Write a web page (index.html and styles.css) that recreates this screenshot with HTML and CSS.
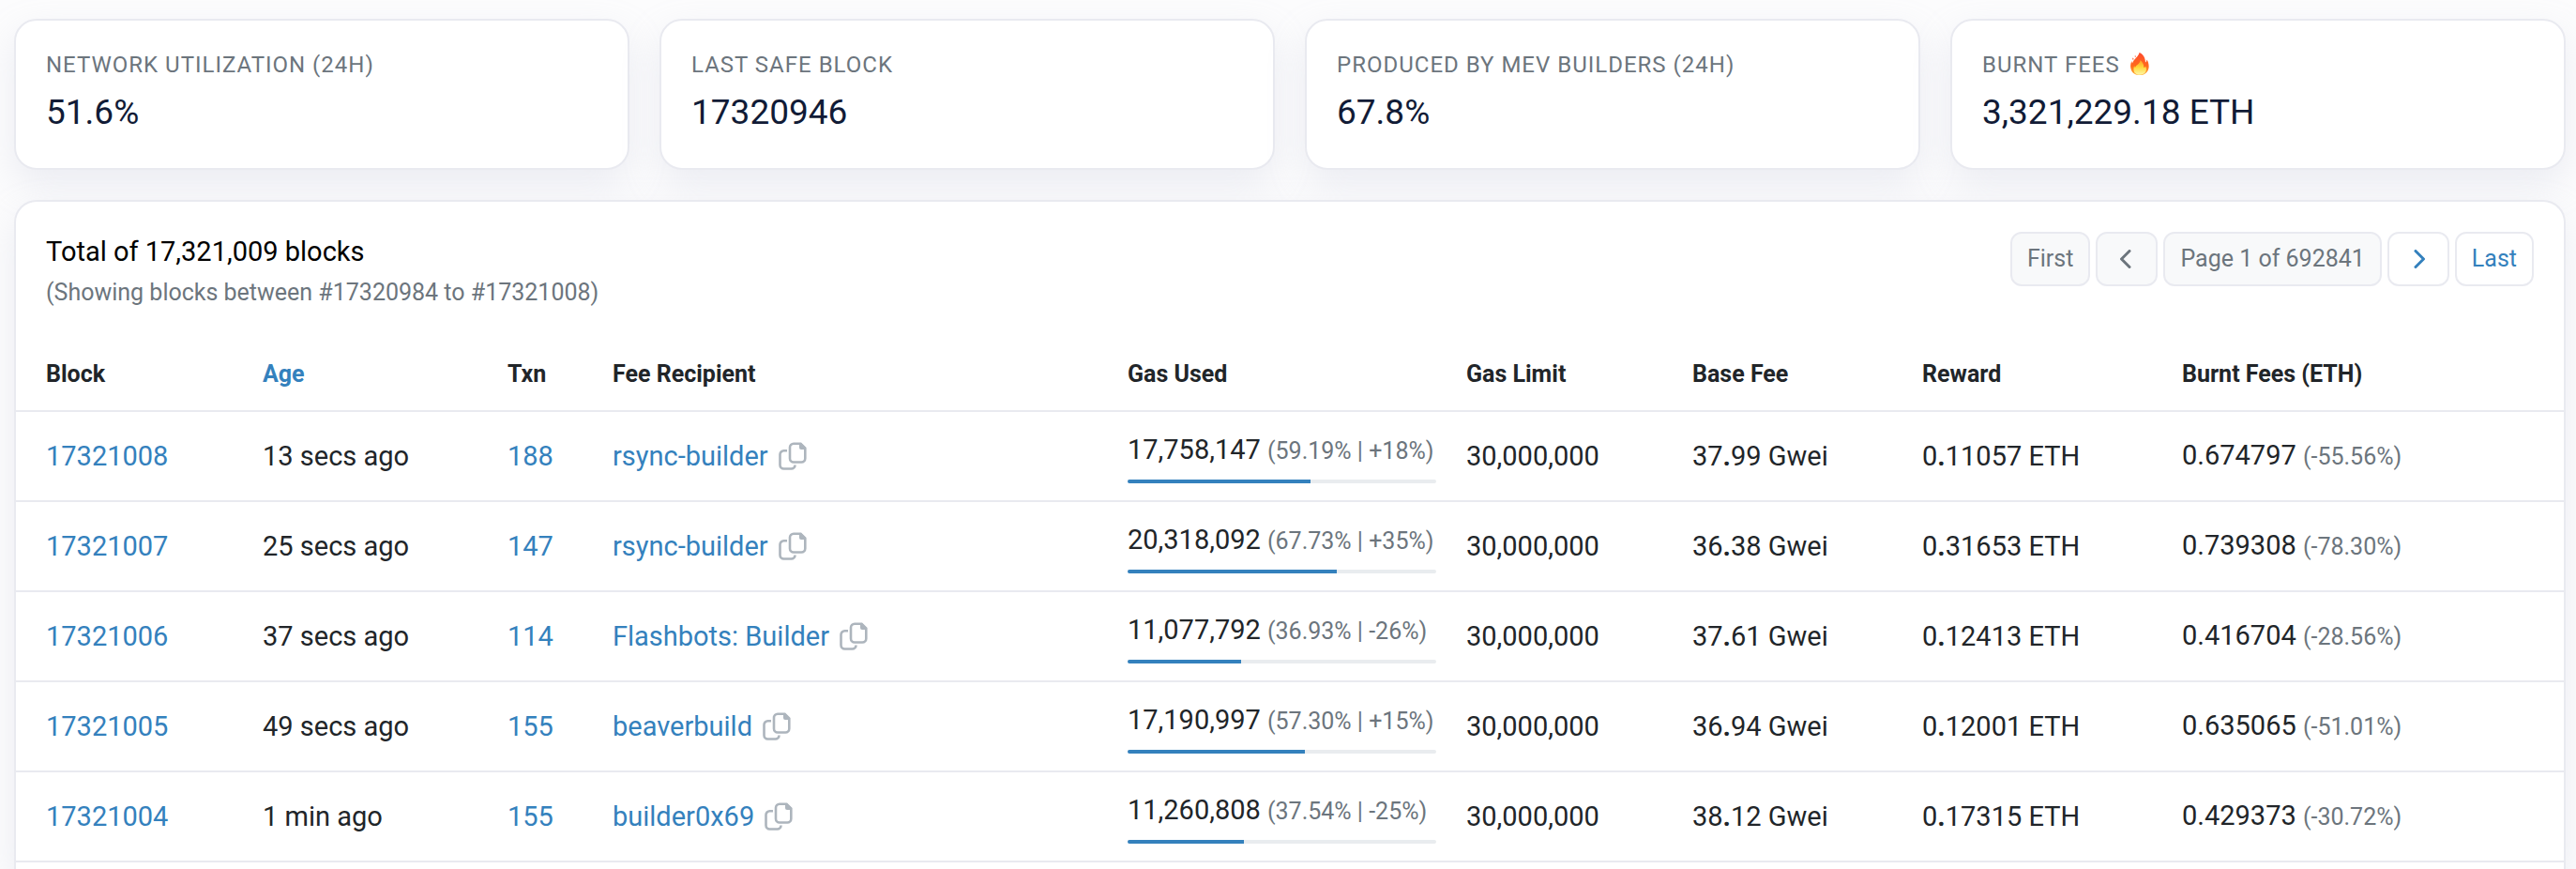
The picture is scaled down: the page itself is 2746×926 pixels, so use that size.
FILE: index.html
```html
<!DOCTYPE html>
<html lang="en">
<head>
<meta charset="utf-8">
<title>Blocks</title>
<link rel="stylesheet" href="styles.css">
</head>
<body>
<svg class="sprite" aria-hidden="true">
  <symbol id="copy" viewBox="0 0 30 30">
    <path d="M9 9.300H5.500A4 4 0 0 0 1.500 13.300V24.500A4 4 0 0 0 5.500 28.500H13.500A4 4 0 0 0 17.500 24.500" fill="none" stroke="currentColor" stroke-width="2.600"/>
    <path d="M16 1.700H23.500L28.300 6.500V17.500A4 4 0 0 1 24.300 21.500H16A4 4 0 0 1 12 17.500V5.700A4 4 0 0 1 16 1.700Z" fill="none" stroke="currentColor" stroke-width="2.600"/>
    <path d="M22 1V6A2 2 0 0 0 24 8H29V6L24 1Z" fill="currentColor"/>
  </symbol>
</svg>
<main class="page">
  <section class="stats">
    <article class="card stat"><h2 class="stat-label">Network Utilization (24H)</h2><p class="stat-value">51.6%</p></article>
    <article class="card stat"><h2 class="stat-label">Last Safe Block</h2><p class="stat-value">17320946</p></article>
    <article class="card stat"><h2 class="stat-label">Produced by MEV Builders (24H)</h2><p class="stat-value">67.8%</p></article>
    <article class="card stat"><h2 class="stat-label">Burnt Fees
      <svg class="flame" viewBox="0 0 20 24" role="img" aria-label="fire">
        <defs>
          <linearGradient id="outer" x1="0" y1="0" x2="0" y2="1"><stop offset="0" stop-color="#ff4a2e"/><stop offset="0.600" stop-color="#ff6a1c"/><stop offset="1" stop-color="#ffb02e"/></linearGradient>
          <linearGradient id="inner" x1="0" y1="0" x2="0" y2="1"><stop offset="0" stop-color="#ff9a22"/><stop offset="0.500" stop-color="#ffd93c"/><stop offset="1" stop-color="#fff7a8"/></linearGradient>
        </defs>
        <path d="M9.500 0C9 4 3.500 7 2 11.500C1.700 10.500 1.500 9.800 1.300 9C0 12-.3 15 .7 18C2 22 5.500 24 10 24C15 24 18.800 21 19.500 16.500C20 13 19 10 17.500 7.500C17.300 9 16.800 10 16 10.500C16 6 14 2 9.500 0Z" fill="url(#outer)"/>
        <path d="M2.500 5.500C2 6.500 2.300 7.500 3 8C3.800 7 3.500 6 2.500 5.500ZM5 3C4.500 4 4.700 4.800 5.300 5.200C6 4.300 5.800 3.500 5 3Z" fill="#ff5a30"/>
        <path d="M10.500 8C10.500 12 6 13 5 16C4.500 15.500 4.300 15 4.200 14C3 17 3.200 20 5 22C6.500 23.300 8 23.800 10 23.800C13 23.800 15.500 22.500 16.500 20C17.300 18 17 16 16 14.500C15.800 15.500 15 16 14.300 16C14.500 13 13 10 10.500 8Z" fill="url(#inner)"/>
      </svg></h2><p class="stat-value">3,321,229.18 ETH</p></article>
  </section>
  <section class="card panel">
    <header class="panel-head">
      <div>
        <h1 class="total">Total of 17,321,009 blocks</h1>
        <p class="range">(Showing blocks between #17320984 to #17321008)</p>
      </div>
      <nav class="pager" aria-label="Pagination">
        <button class="page-btn" disabled>First</button>
        <button class="page-btn arrow" disabled aria-label="Previous"><svg class="chevron" viewBox="0 0 18 20"><path d="M12 1.500L3.500 10L12 18.500"/></svg></button>
        <span class="page-btn current">Page 1 of 692841</span>
        <button class="page-btn arrow" aria-label="Next"><svg class="chevron" viewBox="0 0 18 20"><path d="M6 1.500L14.500 10L6 18.500"/></svg></button>
        <button class="page-btn">Last</button>
      </nav>
    </header>
    <table class="blocks">
      <colgroup><col class="c-block"><col class="c-age"><col class="c-txn"><col class="c-recipient"><col class="c-used"><col class="c-limit"><col class="c-base"><col class="c-reward"><col class="c-burnt"></colgroup>
      <thead>
        <tr><th>Block</th><th><a href="#">Age</a></th><th>Txn</th><th>Fee Recipient</th><th>Gas Used</th><th>Gas Limit</th><th>Base Fee</th><th>Reward</th><th>Burnt Fees (ETH)</th></tr>
      </thead>
      <tbody>
        <tr><td><a href="#">17321008</a></td><td>13 secs ago</td><td><a href="#">188</a></td><td><div class="recipient"><a href="#">rsync-builder</a><button class="copy" aria-label="Copy"><svg class="copy-icon"><use href="#copy"/></svg></button></div></td><td>17,758,147 <small>(59.19% | +18%)</small><div class="bar"><div class="fill" style="width:59.19%"></div></div></td><td>30,000,000</td><td>37<b>.</b>99 Gwei</td><td>0<b>.</b>11057 ETH</td><td>0.674797 <small>(-55.56%)</small></td></tr>
        <tr><td><a href="#">17321007</a></td><td>25 secs ago</td><td><a href="#">147</a></td><td><div class="recipient"><a href="#">rsync-builder</a><button class="copy" aria-label="Copy"><svg class="copy-icon"><use href="#copy"/></svg></button></div></td><td>20,318,092 <small>(67.73% | +35%)</small><div class="bar"><div class="fill" style="width:67.73%"></div></div></td><td>30,000,000</td><td>36<b>.</b>38 Gwei</td><td>0<b>.</b>31653 ETH</td><td>0.739308 <small>(-78.30%)</small></td></tr>
        <tr><td><a href="#">17321006</a></td><td>37 secs ago</td><td><a href="#">114</a></td><td><div class="recipient"><a href="#">Flashbots: Builder</a><button class="copy" aria-label="Copy"><svg class="copy-icon"><use href="#copy"/></svg></button></div></td><td>11,077,792 <small>(36.93% | -26%)</small><div class="bar"><div class="fill" style="width:36.93%"></div></div></td><td>30,000,000</td><td>37<b>.</b>61 Gwei</td><td>0<b>.</b>12413 ETH</td><td>0.416704 <small>(-28.56%)</small></td></tr>
        <tr><td><a href="#">17321005</a></td><td>49 secs ago</td><td><a href="#">155</a></td><td><div class="recipient"><a href="#">beaverbuild</a><button class="copy" aria-label="Copy"><svg class="copy-icon"><use href="#copy"/></svg></button></div></td><td>17,190,997 <small>(57.30% | +15%)</small><div class="bar"><div class="fill" style="width:57.30%"></div></div></td><td>30,000,000</td><td>36<b>.</b>94 Gwei</td><td>0<b>.</b>12001 ETH</td><td>0.635065 <small>(-51.01%)</small></td></tr>
        <tr><td><a href="#">17321004</a></td><td>1 min ago</td><td><a href="#">155</a></td><td><div class="recipient"><a href="#">builder0x69</a><button class="copy" aria-label="Copy"><svg class="copy-icon"><use href="#copy"/></svg></button></div></td><td>11,260,808 <small>(37.54% | -25%)</small><div class="bar"><div class="fill" style="width:37.54%"></div></div></td><td>30,000,000</td><td>38<b>.</b>12 Gwei</td><td>0<b>.</b>17315 ETH</td><td>0.429373 <small>(-30.72%)</small></td></tr>
      </tbody>
    </table>
  </section>
</main>
</body>
</html>
```
FILE: styles.css
```css
* { box-sizing: border-box; }
body { margin: 0; background: #fcfcfd; color: #212529; font-family: Roboto, "Liberation Sans", sans-serif; font-size: 29px; line-height: 44px; }
h1, h2, p { margin: 0; font-weight: 400; }
a { color: #3481bd; text-decoration: none; }
button { font: inherit; color: inherit; margin: 0; }
small { font-size: 25px; color: #6c757d; }
.sprite { position: absolute; width: 0; height: 0; }
.page { min-height: 100vh; padding: 20px 11px 0 15px; display: flex; flex-direction: column; gap: 32px; }
.card { background: #fff; border: 2px solid #e9eaf0; border-radius: 24px; box-shadow: 0 16px 38px rgba(187, 190, 211, 0.25); }
.stats { display: grid; grid-template-columns: repeat(4, minmax(0, 1fr)); gap: 32px; }
.stat { padding: 28px 32px 36px; }
.stat-label { font-size: 24px; line-height: 38px; letter-spacing: 1px; text-transform: uppercase; color: #6c757d; }
.stat-value { margin-top: 8px; font-size: 37px; line-height: 47px; color: #111b36; }
.flame { width: 20px; height: 24px; margin-left: 4px; vertical-align: -3px; }
.panel { flex: 1; border-bottom: 0; border-radius: 24px 24px 0 0; }
.panel-head { display: flex; justify-content: space-between; align-items: flex-start; padding: 32px 32px 0; }
.total { font-size: 29px; line-height: 42px; color: #000; }
.range { margin-top: 4px; font-size: 25px; line-height: 38px; color: #6c757d; }
.pager { display: flex; gap: 6px; font-size: 25px; }
.page-btn { height: 58px; display: flex; align-items: center; justify-content: center; padding: 0 16px; border: 2px solid #e9eaf0; border-radius: 12px; background: #fff; color: #3481bd; white-space: nowrap; }
.page-btn:disabled, .current { background: #f8f9fa; color: #6c757d; }
.arrow { width: 66px; }
.chevron { width: 18px; height: 20px; fill: none; stroke: currentColor; stroke-width: 3px; stroke-linecap: round; stroke-linejoin: round; }
.blocks { width: 100%; margin-top: 28px; border-collapse: separate; border-spacing: 0; table-layout: fixed; }
.c-block { width: 247px; } .c-age { width: 261px; } .c-txn { width: 112px; } .c-recipient { width: 549px; } .c-used { width: 361px; }
.c-limit { width: 241px; } .c-base { width: 245px; } .c-reward { width: 277px; } .c-burnt { width: 423px; }
th, td { padding: 0 16px; border-bottom: 2px solid #e9eaf0; text-align: left; vertical-align: middle; white-space: nowrap; }
th:first-child, td:first-child { padding-left: 32px; }
th { height: 80px; padding-top: 2px; font-size: 25px; font-weight: 700; }
td { height: 96px; }
.recipient { display: flex; align-items: center; gap: 11px; }
.copy { display: flex; padding: 0; border: 0; background: none; color: #adb5bd; }
.copy-icon { width: 30px; height: 30px; }
.bar { height: 4px; margin-top: 8px; border-radius: 2px; background: #e9ecef; overflow: hidden; }
.fill { height: 100%; background: #3481bd; }
```
